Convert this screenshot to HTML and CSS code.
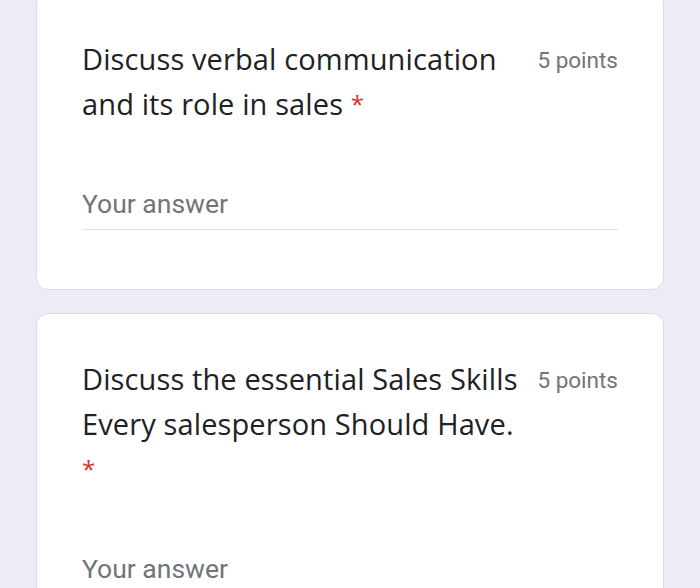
FILE: index.html
```html
<!DOCTYPE html>
<html>
<head>
<meta charset="utf-8">
<link rel="stylesheet" href="styles.css">
</head>
<body>
<div class="list">
  <div class="card">
    <div class="head">
      <div class="title">Discuss verbal communication and its role in sales <span class="req">*</span></div>
      <div class="points">5 points</div>
    </div>
    <div class="answer">Your answer</div>
  </div>
  <div class="card">
    <div class="head">
      <div class="title">Discuss the essential Sales Skills Every salesperson Should Have. <span class="req">*</span></div>
      <div class="points">5 points</div>
    </div>
    <div class="answer">Your answer</div>
  </div>
</div>
</body>
</html>
```
FILE: styles.css
```css
html, body {
  margin: 0;
  padding: 0;
  background: #eeebf6;
  overflow: hidden;
}
.list {
  margin-top: -7px;
  padding: 0 36px;
  display: flex;
  flex-direction: column;
  gap: 23px;
}
.card {
  background: #fff;
  border: 1px solid #dadce0;
  border-radius: 12px;
  padding: 42px 45px 59px;
}
.head {
  display: flex;
  align-items: flex-start;
  gap: 16px;
}
.title {
  flex: 1;
  font-family: "Open Sans", sans-serif;
  font-size: 29px;
  line-height: 45px;
  color: #202124;
  letter-spacing: 0.12px;
}
.req {
  color: #d93025;
  font-size: 24px;
  vertical-align: 2px;
}
.points {
  font-family: Roboto, sans-serif;
  font-size: 22.5px;
  line-height: 45px;
  color: #70757a;
  white-space: nowrap;
  padding-top: 2px;
}
.answer {
  margin-top: 63px;
  font-family: Roboto, sans-serif;
  font-size: 26.5px;
  line-height: 30px;
  color: #70757a;
  padding-bottom: 10px;
  border-bottom: 1px solid #e0e0e0;
}
```
